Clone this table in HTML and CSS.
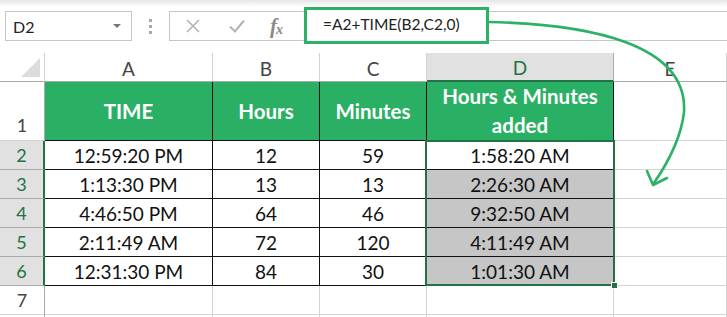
FILE: index.html
```html
<!DOCTYPE html>
<html lang="en">
<head>
<meta charset="utf-8">
<title>TIME function</title>
<link rel="stylesheet" href="styles.css">
</head>
<body>
<div class="app">
  <div class="toolbar">
    <div class="namebox">
      <span class="name">D2</span>
      <span class="caret"></span>
    </div>
    <div class="grip"><i></i><i></i><i></i></div>
    <div class="fbar">
      <div class="fbtns">
        <svg class="ico" width="16" height="16" viewBox="0 0 16 16"><path d="M2 2 L14 14 M14 2 L2 14" stroke="#b3b3b3" stroke-width="1.6" fill="none"/></svg>
        <svg class="ico" width="18" height="16" viewBox="0 0 18 16"><path d="M2 8.5 L7 13.5 L16 2.5" stroke="#b3b3b3" stroke-width="2" fill="none"/></svg>
        <span class="fx">f<sub>x</sub></span>
      </div>
      <div class="formula">=A2+TIME(B2,C2,0)</div>
    </div>
  </div>

  <div class="sheet">
    <div class="hd corner"><span class="tri"></span></div>
    <div class="hd col">A</div>
    <div class="hd col">B</div>
    <div class="hd col">C</div>
    <div class="hd col sel">D</div>
    <div class="hd col">E</div>

    <div class="hd row r1">1</div>
    <div class="c th">TIME</div>
    <div class="c th">Hours</div>
    <div class="c th">Minutes</div>
    <div class="c th wrap">Hours &amp; Minutes<br>added</div>
    <div class="c"></div>

    <div class="hd row sel">2</div>
    <div class="c td">12:59:20 PM</div>
    <div class="c td">12</div>
    <div class="c td">59</div>
    <div class="c td">1:58:20 AM</div>
    <div class="c"></div>

    <div class="hd row sel">3</div>
    <div class="c td">1:13:30 PM</div>
    <div class="c td">13</div>
    <div class="c td">13</div>
    <div class="c td hi">2:26:30 AM</div>
    <div class="c"></div>

    <div class="hd row sel">4</div>
    <div class="c td">4:46:50 PM</div>
    <div class="c td">64</div>
    <div class="c td">46</div>
    <div class="c td hi">9:32:50 AM</div>
    <div class="c"></div>

    <div class="hd row sel">5</div>
    <div class="c td">2:11:49 AM</div>
    <div class="c td">72</div>
    <div class="c td">120</div>
    <div class="c td hi">4:11:49 AM</div>
    <div class="c"></div>

    <div class="hd row sel">6</div>
    <div class="c td">12:31:30 PM</div>
    <div class="c td">84</div>
    <div class="c td">30</div>
    <div class="c td hi">1:01:30 AM</div>
    <div class="c"></div>

    <div class="hd row">7</div>
    <div class="c"></div>
    <div class="c"></div>
    <div class="c"></div>
    <div class="c"></div>
    <div class="c"></div>

    <div class="hd row"></div>
    <div class="c"></div>
    <div class="c"></div>
    <div class="c"></div>
    <div class="c"></div>
    <div class="c"></div>

    <div class="selection"><span class="handle"></span></div>
  </div>

  <svg class="arrow" width="727" height="317" viewBox="0 0 727 317">
    <path d="M489 22 C590 24 688 44 684 112 C681 140 667 164 654 183" stroke="#2bb168" stroke-width="2.6" fill="none" stroke-linecap="round"/>
    <path d="M647 171 L653 185 L667 178" stroke="#2bb168" stroke-width="2.6" fill="none" stroke-linecap="round" stroke-linejoin="round"/>
  </svg>
</div>
</body>
</html>
```
FILE: styles.css
```css
* { box-sizing: border-box; }

html, body {
  margin: 0;
  padding: 0;
  background: #ffffff;
}

.app {
  position: relative;
  width: 727px;
  height: 317px;
  overflow: hidden;
  font-family: Lato, "Open Sans", sans-serif;
  color: #111;
}

/* ---------- formula bar ---------- */
.toolbar {
  height: 53px;
  display: flex;
  align-items: flex-start;
  padding: 11px 0 0 5px;
  background: linear-gradient(#e6e6e6 0, #ffffff 7px);
}

.namebox {
  width: 127px;
  height: 30px;
  border: 1px solid #c6c6c6;
  background: #fff;
  display: flex;
  align-items: center;
  justify-content: space-between;
  padding: 0 10px 0 7px;
}

.name {
  font-size: 16px;
  color: #222;
}

.caret {
  width: 0;
  height: 0;
  border-left: 4px solid transparent;
  border-right: 4px solid transparent;
  border-top: 4px solid #777;
}

.grip {
  width: 37px;
  height: 30px;
  display: flex;
  flex-direction: column;
  align-items: center;
  justify-content: center;
  gap: 3px;
}

.grip i {
  display: block;
  width: 3px;
  height: 3px;
  background: #a8a8a8;
}

.fbar {
  flex: 1;
  height: 30px;
  border: 1px solid #c6c6c6;
  border-right: none;
  display: flex;
  align-items: stretch;
  background: #fff;
}

.fbtns {
  width: 134px;
  display: flex;
  align-items: center;
  padding-left: 15px;
  gap: 27px;
}

.fx {
  font-family: "Liberation Serif", "DejaVu Serif", serif;
  font-style: italic;
  font-weight: 700;
  font-size: 21px;
  color: #8a8a8a;
  margin-left: -3px;
  letter-spacing: -1px;
  line-height: 1;
}

.fx sub {
  font-size: 14px;
  vertical-align: -1px;
}

.formula {
  width: 185px;
  height: 37px;
  margin: -5px 0 0 0;
  border: 3px solid #2bb168;
  background: #fff;
  font-size: 15.5px;
  color: #222;
  padding: 5px 0 0 16px;
}

/* ---------- grid ---------- */
.sheet {
  position: relative;
  display: grid;
  grid-template-columns: 45px 168px 107px 107px 187px 113px;
  grid-template-rows: 29px 59px repeat(6, 29px) 40px;
}

.hd {
  display: flex;
  align-items: center;
  justify-content: center;
  border-right: 1px solid #d4d4d4;
  border-bottom: 1px solid #ababab;
  color: #444;
  background: #fff;
}

.col {
  font-size: 19px;
  padding-top: 2px;
}

.col.sel {
  background: #e1e1e1;
  color: #217346;
  border-bottom: 2px solid #217346;
  border-right-color: #ababab;
}

.corner {
  position: relative;
  border-right-color: #d4d4d4;
}

.tri {
  position: absolute;
  right: 4px;
  bottom: 4px;
  width: 0;
  height: 0;
  border-left: 19px solid transparent;
  border-bottom: 19px solid #dcdcdc;
}

.row {
  font-size: 18px;
  border-right: 1px solid #ababab;
  border-bottom-color: #d4d4d4;
}

.r1 {
  align-items: flex-end;
  padding-bottom: 4px;
}

.row.sel {
  background: #e1e1e1;
  color: #217346;
  border-right: 2px solid #217346;
  border-bottom-color: #ababab;
}

.c {
  border-right: 1px solid #d4d4d4;
  border-bottom: 1px solid #d4d4d4;
  display: flex;
  align-items: center;
  justify-content: center;
  font-size: 19px;
  color: #111;
}

.th {
  background: #2ab064;
  color: #fff;
  font-weight: 700;
  font-size: 20.5px;
  border-right-color: #111;
  border-bottom-color: #111;
  text-align: center;
  line-height: 29px;
}

.td {
  border-right-color: #111;
  border-bottom-color: #111;
  padding-top: 1px;
}

.hi {
  background: #c6c6c6;
}

.selection {
  position: absolute;
  left: 425px;
  top: 87px;
  width: 190px;
  height: 146px;
  border: 2px solid #217346;
  pointer-events: none;
}

.handle {
  position: absolute;
  right: -5px;
  bottom: -5px;
  width: 7px;
  height: 7px;
  background: #217346;
  border: 1px solid #fff;
}

.arrow {
  position: absolute;
  left: 0;
  top: 0;
  pointer-events: none;
}
```
